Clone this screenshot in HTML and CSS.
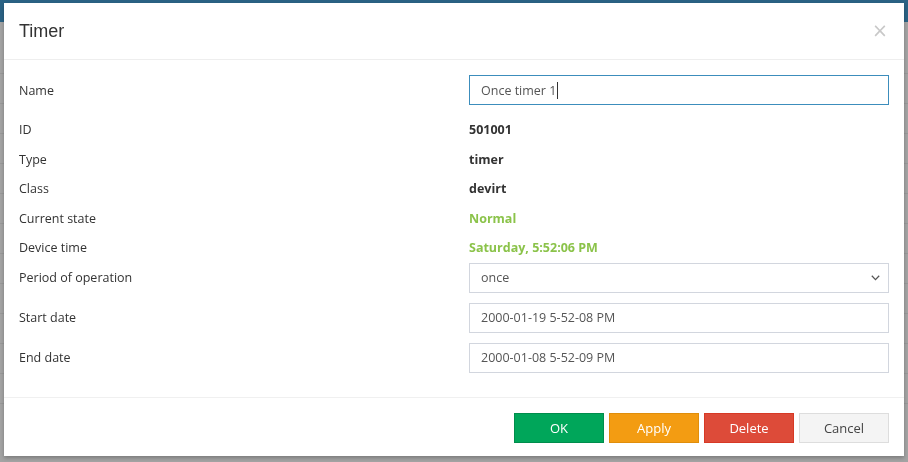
FILE: index.html
```html
<!DOCTYPE html>
<html>
<head>
<meta charset="utf-8">
<link rel="stylesheet" href="styles.css">
</head>
<body>
<div class="page">
  <div class="topbar"><span class="host">192.168.0.50</span></div>
  <div class="page-body">
    <div class="line"></div><div class="line"></div><div class="line"></div><div class="line"></div><div class="line"></div><div class="line"></div><div class="line"></div><div class="line"></div><div class="line"></div><div class="line"></div><div class="line"></div><div class="line"></div>
  </div>
</div>
<div class="overlay">
  <div class="modal">
    <div class="modal-header">
      <h4 class="modal-title">Timer</h4>
      <span class="close">×</span>
    </div>
    <div class="modal-body">
      <div class="row row-field">
        <div class="label">Name</div>
        <div class="value"><div class="input focus">Once timer 1<span class="caret"></span></div></div>
      </div>
      <div class="row row-text">
        <div class="label">ID</div>
        <div class="value strong">501001</div>
      </div>
      <div class="row row-text">
        <div class="label">Type</div>
        <div class="value strong">timer</div>
      </div>
      <div class="row row-text">
        <div class="label">Class</div>
        <div class="value strong">devirt</div>
      </div>
      <div class="row row-text">
        <div class="label">Current state</div>
        <div class="value strong green">Normal</div>
      </div>
      <div class="row row-text">
        <div class="label">Device time</div>
        <div class="value strong green">Saturday, 5:52:06 PM</div>
      </div>
      <div class="row row-field">
        <div class="label">Period of operation</div>
        <div class="value"><div class="input select"><span>once</span>
          <svg class="chev" width="9" height="6" viewBox="0 0 9 6"><path d="M0.8 0.8 L4.5 4.6 L8.2 0.8" fill="none" stroke="#555" stroke-width="1.3"/></svg>
        </div></div>
      </div>
      <div class="row row-field">
        <div class="label">Start date</div>
        <div class="value"><div class="input">2000-01-19 5-52-08 PM</div></div>
      </div>
      <div class="row row-field last">
        <div class="label">End date</div>
        <div class="value"><div class="input">2000-01-08 5-52-09 PM</div></div>
      </div>
    </div>
    <div class="modal-footer">
      <button class="btn btn-ok">OK</button>
      <button class="btn btn-apply">Apply</button>
      <button class="btn btn-delete">Delete</button>
      <button class="btn btn-cancel">Cancel</button>
    </div>
  </div>
</div>
</body>
</html>
```

FILE: styles.css
```css
* { box-sizing: border-box; }
html, body { margin: 0; padding: 0; }
body {
  width: 908px;
  height: 462px;
  overflow: hidden;
  background: #a4a4a4;
  font-family: "Open Sans", "Noto Sans", sans-serif;
  font-size: 12.5px;
  color: #333;
}
.page { display: flex; flex-direction: column; height: 462px; }
.topbar {
  height: 22px;
  background: #2b6385;
  display: flex;
  justify-content: center;
  align-items: flex-end;
}
.host {
  color: #9fb6c6;
  font-size: 13px;
  line-height: 13px;
  margin-bottom: 6px;
  margin-left: 22px;
}
.page-body { display: flex; flex-direction: column; padding-top: 22px; }
.line { height: 30px; border-bottom: 1px solid #999; }

.overlay {
  position: fixed;
  inset: 0;
  padding: 3px 4px 0 4px;
}
.modal {
  width: 900px;
  height: 453px;
  background: #fff;
  box-shadow: 0 2px 4px rgba(0,0,0,0.25);
  display: flex;
  flex-direction: column;
}
.modal-header {
  height: 57px;
  border-bottom: 1px solid #eeeeee;
  display: flex;
  align-items: center;
  justify-content: space-between;
  padding: 0 15px 0 15px;
}
.modal-title {
  margin: 0;
  font-family: "Liberation Sans", Arial, sans-serif;
  font-weight: normal;
  font-size: 18px;
  color: #333;
  padding-top: 1px;
}
.close {
  font-family: "DejaVu Sans", sans-serif;
  font-size: 19px;
  color: #c8c8c8;
  line-height: 1;
  margin-right: 1px;
  margin-top: -1px;
}
.modal-body {
  padding: 15px 15px 24px 15px;
  display: flex;
  flex-direction: column;
  border-bottom: 1px solid #f0f0f0;
}
.row {
  display: grid;
  grid-template-columns: 450px 1fr;
  align-items: center;
}
.row-field { height: 30px; margin-bottom: 10px; }
.row-field.last { margin-bottom: 0; }
.row-text { height: 29.5px; }
.label { color: #333; }
.value.strong { font-weight: bold; color: #333; }
.value.green { color: #8bc34a; }
.input {
  height: 30px;
  border: 1px solid #d2d6de;
  padding: 0 11px;
  display: flex;
  align-items: center;
  color: #555;
  font-size: 12.5px;
}
.input.focus { border-color: #3c8dbc; }
.caret {
  display: inline-block;
  width: 1px;
  height: 17px;
  background: #333;
  margin-left: 1px;
}
.select { justify-content: space-between; padding-right: 8px; }
.chev { margin-top: 1px; }
.modal-footer {
  flex: 1;
  display: flex;
  justify-content: flex-end;
  align-items: flex-start;
  gap: 5px;
  padding: 15px 15px 0 15px;
}
.btn {
  width: 90px;
  height: 30px;
  border: 1px solid;
  font-family: "Open Sans", "Noto Sans", sans-serif;
  font-size: 13px;
  color: #fff;
  padding: 0;
}
.btn-ok { background: #00a65a; border-color: #008d4c; }
.btn-apply { background: #f39c12; border-color: #e08e0b; }
.btn-delete { background: #dd4b39; border-color: #d73925; }
.btn-cancel { background: #f4f4f4; border-color: #dddddd; color: #444; }
```
